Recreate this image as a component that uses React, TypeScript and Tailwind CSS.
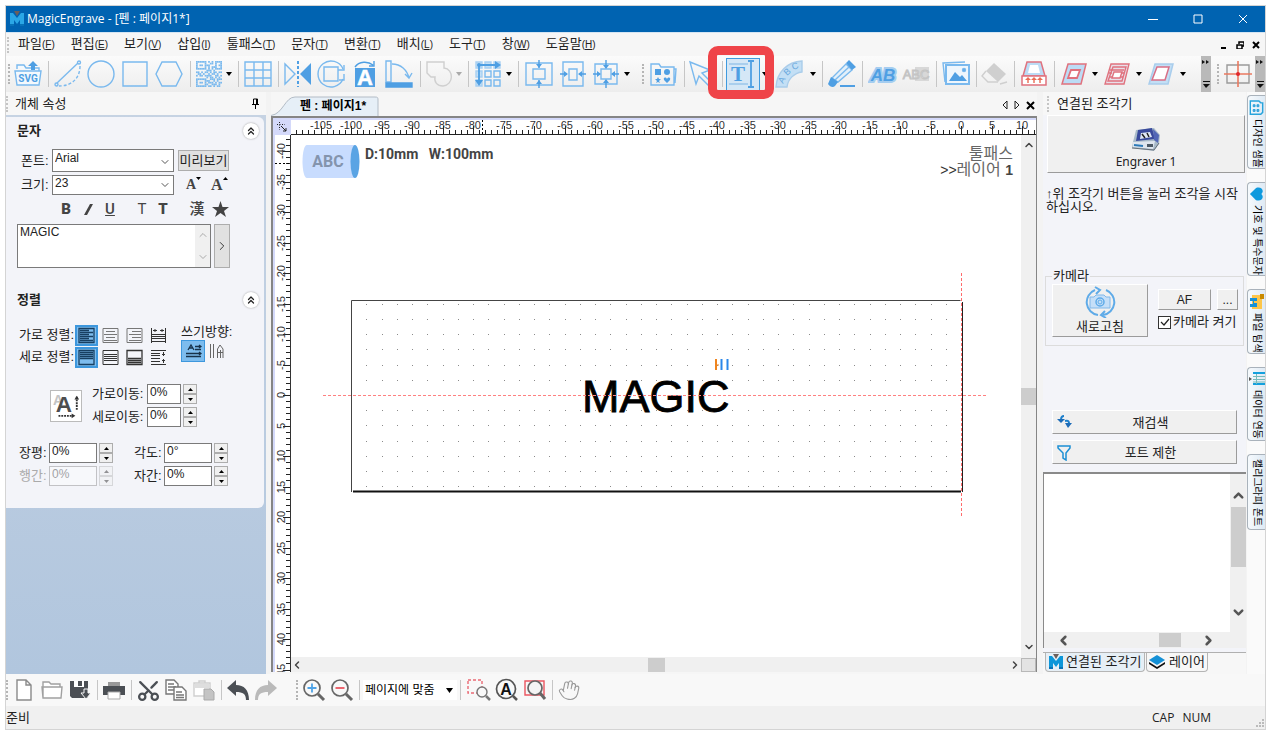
import React, { ReactNode } from 'react';
import { ChevronDown, ChevronUp, ChevronLeft, ChevronRight, ChevronsUp, Scissors, Hand } from 'lucide-react';

const LINE = '#7ab9ee';
const FILL = '#4f9fe3';
const PALE = '#c3dff5';
const GREY = '#cfcfcf';
const DARK = '#4b4f54';
const ROSE = '#e0727e';

const MM = 6.1;

interface IconProps { children: ReactNode; size?: number; }

function Ico({ children, size = 28 }: IconProps) {
  return (
    <svg width={size} height={size} viewBox="0 0 28 28" fill="none" stroke={LINE} strokeWidth="1.4" className="shrink-0 overflow-visible">
      {children}
    </svg>
  );
}

function Logo({ light }: { light?: boolean }) {
  return (
    <svg width="16" height="16" viewBox="0 0 16 16" className="shrink-0">
      <path d="M1 15V2h3l4 5 4-5h3v13h-4V9l-3 4-3-4v6z" fill={light ? '#2aa7e6' : '#0c96d9'} />
      <path d="M5 0h6L8 5z" fill="#6b5f5c" />
      <path d="M1 14h4M11 14h4" stroke="#0873b8" strokeWidth="2" />
    </svg>
  );
}

function Tool({ label, w = 'w-[34px]', children }: { label: string; w?: string; children: ReactNode }) {
  return (
    <button aria-label={label} title={label} className={`${w} h-8 shrink-0 flex items-center justify-center`}>
      {children}
    </button>
  );
}

function Drop({ off }: { off?: boolean }) {
  return (
    <button aria-label="더보기" className="w-[10px] h-8 shrink-0 flex items-center justify-center">
      <svg width="6" height="4" viewBox="0 0 6 4"><path d="M0 0h6L3 4z" fill={off ? '#aaa' : '#000'} /></svg>
    </button>
  );
}

function Sep() {
  return <div className="w-2 shrink-0 flex justify-center"><div className="w-px h-[26px] bg-[#c6c6c6]" /></div>;
}

function Grip() {
  return <div className="w-[6px] shrink-0 flex justify-center"><div className="h-5 border-l-2 border-dotted border-[#b5b5b5]" /></div>;
}

function Overflow() {
  return (
    <button aria-label="도구 모음 옵션" className="w-[10px] h-9 shrink-0 bg-[#b9b9b9] flex flex-col items-center justify-between py-1">
      <svg width="8" height="5" viewBox="0 0 8 5"><path d="M0 0l3 2-3 2zM4 0l3 2-3 2z" fill="#111" /></svg>
      <svg width="7" height="7" viewBox="0 0 7 7"><path d="M0 0h7v1H0zM0 3h7L3 7z" fill="#111" /></svg>
    </button>
  );
}

// Fixed bit pattern for the barcode tool icon
const QR = ['111111010101111', '100001001101001', '101101110001011', '100001010111001', '111111010101111', '000000111010000', '110101101011011', '011010010110100', '101101111001101', '000000101101010', '111111001110111', '100001110010100', '101101011101011', '100001100111010', '111111011010110'];

function Parallelogram({ kind }: { kind: 'in' | 'rings' | 'out' }) {
  if (kind === 'rings') {
    return (
      <Ico>
        <g stroke={ROSE} strokeWidth="1.4">
          <path d="M8 4h18l-5 20H2z" fill="#e8dfe8" />
          <path d="M10 7h13l-4 14H5z" />
          <path d="M7 10h14M6 13h3M18 13h3M6 17h3M17 17h3" />
          <path d="M11 12h8l-2 6H9z" fill="#fff" />
        </g>
      </Ico>
    );
  }
  return (
    <Ico>
      <path d="M8 4h18l-5 20H2z" fill={kind === 'out' ? PALE : '#bcdcf5'} stroke={kind === 'out' ? '#a9cdec' : ROSE} strokeWidth="1.5" />
      {kind === 'out'
        ? <path d="M10 7h12l-4 13H5z" fill="#fff" stroke="#d96f86" strokeWidth="1.5" />
        : <path d="M11 10h9l-3 8H8z" fill="#fff" stroke={ROSE} strokeWidth="1.8" />}
    </Ico>
  );
}

function MainToolbar() {
  return (
    <div className="h-9 flex items-center bg-gradient-to-b from-[#fbfbfb] to-[#ededed]">
      <Grip />
      <Tool label="SVG 불러오기" w="w-8">
        <Ico>
          <path d="M3 9V5h7l2 3h13v3M1 11h26l-2 14H3z" fill="#f4f9fd" />
          <path d="M19 1l5 5h-3v4h-4V6h-3z" fill={FILL} stroke="none" />
          <text x="14" y="22" textAnchor="middle" fontSize="10" fontWeight="700" fontFamily="Roboto, sans-serif" fill={FILL} stroke="none">SVG</text>
        </Ico>
      </Tool>
      <Sep />
      <Tool label="선" w="w-8">
        <Ico>
          <path d="M3 23L24 3" /><circle cx="25" cy="2.500" r="1.500" /><circle cx="2.500" cy="24.500" r="1.500" />
          <path d="M26 6c0 12-8 20-21 20" strokeDasharray="3 2" />
        </Ico>
      </Tool>
      <Tool label="원"><Ico><circle cx="14" cy="14" r="13" /></Ico></Tool>
      <Tool label="사각형"><Ico><path d="M2 2h24v24H2z" /></Ico></Tool>
      <Tool label="다각형"><Ico><path d="M7 2h14l6 12-6 12H7L1 14z" /></Ico></Tool>
      <Sep />
      <Tool label="바코드" w="w-[30px]">
        <svg width="26" height="26" viewBox="0 0 15 15" fill={LINE}>
          {QR.map((row, y) => row.split('').map((bit, x) => bit === '1' && <rect key={`${x}-${y}`} x={x} y={y} width="1" height="1" />))}
        </svg>
      </Tool>
      <Drop />
      <Sep />
      <Tool label="표" w="w-8"><Ico><path d="M1 2h26v24H1zM1 10h26M1 18h26M10 2v24M19 2v24" /></Ico></Tool>
      <Sep />
      <Tool label="대칭" w="w-8">
        <Ico><path d="M1 4v20l10-10z" /><path d="M27 3v22L16 14z" fill={FILL} stroke="none" /><path d="M14 1v26" strokeDasharray="3 2" stroke={FILL} strokeWidth="2" /></Ico>
      </Tool>
      <Tool label="회전"><Ico><path d="M26 9A13 13 0 1 0 26 19" /><path d="M27 5v5h-6M27 14v6h-5" /><path d="M7 7h14v14H7z" /></Ico></Tool>
      <Tool label="문자 회전">
        <Ico>
          <path d="M4 8h20v19H4z" fill={FILL} stroke="none" /><path d="M4 7c4-6 13-6 18-2M23 1v5h-5" stroke={FILL} />
          <text x="14" y="25" textAnchor="middle" fontSize="22" fontWeight="700" fontFamily="Liberation Sans, sans-serif" fill="#fff" stroke="#fff" strokeWidth="0.500">A</text>
        </Ico>
      </Tool>
      <Tool label="각도">
        <Ico><path d="M1 1h5v21H1z" /><path d="M1 23h26v4H1z" fill={FILL} stroke={FILL} /><path d="M7 4c9 0 15 6 17 14M20 14l4 4 3-5" /></Ico>
      </Tool>
      <Sep />
      <Tool label="결합" w="w-[30px]"><Ico><path d="M2 2h17v6c10 1 10 17-1 18-6 0-9-4-8-9H6l-4-4z" stroke={GREY} /></Ico></Tool>
      <Drop off />
      <Sep />
      <Tool label="배열" w="w-8">
        <Ico>
          <path d="M2 2h6v6H2zM11 2h6v6h-6zM20 2h6v6h-6zM2 11h6v6H2zM2 20h6v6H2z" fill={PALE} stroke="#a8d0f2" />
          <path d="M11 11h6v6h-6zM20 11h6v6h-6zM11 20h6v6h-6zM20 20h6v6h-6z" />
          <path d="M5 23V5h18" stroke={FILL} strokeWidth="1.800" /><path d="M21 1l6 4-6 4zM1 20l4 6 4-6z" fill={FILL} stroke="none" /><circle cx="5" cy="5" r="2" fill={FILL} stroke="none" />
        </Ico>
      </Tool>
      <Drop />
      <Sep />
      <Tool label="세로 가운데"><Ico><path d="M1 3h26v22H1zM8 9h12v10H8z" /><path d="M14 0v8M14 28v-8" stroke={FILL} /><path d="M11 4h6l-3 4zM11 24h6l-3-4z" fill={FILL} stroke="none" /></Ico></Tool>
      <Tool label="가로 가운데" ><Ico><path d="M4 2h20v24H4zM10 9h8v11h-8z" /><path d="M1 14h7M27 14h-7" stroke={FILL} /><path d="M5 11v6l4-3zM23 11v6l-4-3z" fill={FILL} stroke="none" /></Ico></Tool>
      <Tool label="정가운데" w="w-8"><Ico><path d="M3 4h22v20H3zM9 9h10v10H9z" /><path d="M1 14h7M27 14h-7M14 0v8M14 28v-8" stroke={FILL} /><path d="M5 11v6l4-3zM23 11v6l-4-3zM11 5h6l-3 4zM11 23h6l-3-4z" fill={FILL} stroke="none" /></Ico></Tool>
      <Drop />
      <div className="w-2 shrink-0" />
      <Grip />
      <Tool label="기호">
        <Ico>
          <path d="M2 4h8l2 3h13v18H2zM25 9h2l-1 14" />
          <path d="M6 9h6v6H6z" fill={FILL} stroke="none" /><circle cx="18" cy="12" r="3" fill={FILL} stroke="none" />
          <path d="M9 17l1 2h2l-2 2 1 2-2-1-2 1 1-2-2-2h2zM18 23l-3-3c-1-3 2-3 3-1 1-2 4-2 3 1z" fill={FILL} stroke="none" />
        </Ico>
      </Tool>
      <Sep />
      <Tool label="선택" w="w-[30px]"><Ico><path d="M1 2l20 8-8 3 10 10-3 3-10-10-3 8z" /></Ico></Tool>
      <Sep />
      <div className="relative shrink-0">
        <button aria-label="문자" aria-pressed="true" className="w-[34px] h-[33px] flex items-center justify-center border border-[#3f9ade] bg-[#d5e7f6]">
          <Ico>
            <path d="M0 4h19M0 24h19" stroke="#9ac6ea" />
            <text x="9" y="21" textAnchor="middle" fontSize="21" fontWeight="700" fontFamily="Liberation Serif, serif" fill={FILL} stroke="none">T</text>
            <path d="M19 1h6M22 1v26M19 27h6" stroke={FILL} strokeWidth="1.800" />
          </Ico>
        </button>
        <div className="absolute z-10 -left-[18px] -top-3 w-[66px] h-[53px] border-[9px] border-[#ef4449] rounded-[10px] pointer-events-none" />
      </div>
      <Drop />
      <Tool label="호 문자" w="w-[38px]">
        <Ico>
          <path d="M1 27C2 12 12 2 27 1v11c-8 1-14 7-15 15z" fill={PALE} stroke="#aacdea" />
          <g fill="#6aa9de" stroke="none" fontSize="9" fontFamily="Liberation Sans, sans-serif">
            <text transform="translate(8 24) rotate(-62)">A</text><text transform="translate(12 16) rotate(-42)">B</text><text transform="translate(18 10) rotate(-20)">C</text>
          </g>
        </Ico>
      </Tool>
      <Drop />
      <Sep />
      <Tool label="펜" w="w-8">
        <Ico><path d="M4 18L18 4l6 6-14 12z" fill="#e3f0fa" /><path d="M7 20L21 7" /><path d="M18 3l3-3 7 7-4 3zM0 24l3-7 7 5-3 4c-2 2-5 1-7-2zM12 25h15v2H12z" fill={FILL} stroke="none" /></Ico>
      </Tool>
      <Sep />
      <Tool label="윤곽 문자">
        <svg width="30" height="28" viewBox="0 0 30 28">
          <text x="15" y="21" textAnchor="middle" fontSize="17" fontWeight="700" fontStyle="italic" fontFamily="Liberation Sans, sans-serif" fill={FILL} stroke="#a5cdf0" strokeWidth="4" paintOrder="stroke">AB</text>
        </svg>
      </Tool>
      <Tool label="병합 문자" w="w-8">
        <svg width="28" height="28" viewBox="0 0 28 28">
          <path d="M13 7h14v14H13z" fill="#d8d8d8" />
          <text x="14" y="19" textAnchor="middle" fontSize="13" fontFamily="Liberation Sans, sans-serif" fill="#f5f5f5" stroke="#c4c4c4" strokeWidth="1">ABC</text>
        </svg>
      </Tool>
      <Sep />
      <Tool label="그림" w="w-8">
        <Ico><path d="M3 22L1 3l22-1" /><path d="M4 5h23v19H4z" fill="#eef6fd" strokeWidth="2" /><path d="M7 21l6-9 5 5 2-2 5 6z" fill={FILL} stroke="none" /><circle cx="22" cy="10" r="1.500" fill={FILL} /></Ico>
      </Tool>
      <Sep />
      <Tool label="지우개" w="w-[30px]">
        <Ico><path d="M13 3l12 11-8 8L5 11z" fill={GREY} stroke="none" /><path d="M5 11l-4 5 6 6h10M19 24l7-2" stroke={GREY} /></Ico>
      </Tool>
      <Sep />
      <Tool label="조각" w="w-8">
        <Ico>
          <path d="M7 2h14l4 14H3z" fill="#bcdcf5" stroke={ROSE} strokeWidth="1.500" /><path d="M10 5h8l2 8H8z" fill="#fff" stroke="none" />
          <path d="M2 16h24v9H2z" fill="#fff" stroke={ROSE} strokeWidth="1.500" />
          <path d="M8 23v-4M14 23v-4M20 23v-4" stroke="#ea6d55" /><path d="M5 20l3-3 3 3zM11 20l3-3 3 3zM17 20l3-3 3 3z" fill="#ea6d55" stroke="none" />
        </Ico>
      </Tool>
      <Sep />
      <Tool label="안쪽 채우기" w="w-8"><Parallelogram kind="in" /></Tool>
      <Drop />
      <Tool label="등고선 채우기"><Parallelogram kind="rings" /></Tool>
      <Drop />
      <Tool label="바깥쪽 채우기"><Parallelogram kind="out" /></Tool>
      <Drop />
      <div className="grow" />
      <Overflow />
      <div className="w-1 shrink-0" />
      <Grip />
      <Tool label="원점">
        <Ico><path d="M3 5h22v18H3z" stroke="#9a9a9a" /><path d="M0 14h28M14 1v26" stroke="#ea7a60" strokeWidth="1.600" /><circle cx="14" cy="14" r="2" fill="#e0262c" stroke="none" /></Ico>
      </Tool>
      <Overflow />
    </div>
  );
}

const MENUS = [['파일', 'F'], ['편집', 'E'], ['보기', 'V'], ['삽입', 'I'], ['툴패스', 'T'], ['문자', 'T'], ['변환', 'T'], ['배치', 'L'], ['도구', 'T'], ['창', 'W'], ['도움말', 'H']];

function Header() {
  return (
    <header>
      <div className="h-[26px] bg-[#0063b1] text-white flex items-center pl-[3px]">
        <Logo light />
        <h1 className="ml-0.5 text-xs font-['Open_Sans','Noto_Sans_CJK_KR',sans-serif]">MagicEngrave - [펜 : 페이지1*]</h1>
        <div className="ml-auto flex">
          <button aria-label="최소화" className="w-[45px] flex justify-center"><svg width="10" height="10" stroke="#fff"><path d="M0 5.500h10" /></svg></button>
          <button aria-label="최대화" className="w-[45px] flex justify-center"><svg width="10" height="10" stroke="#fff" fill="none"><path d="M1 1h8v8H1z" /></svg></button>
          <button aria-label="닫기" className="w-[45px] flex justify-center"><svg width="10" height="10" stroke="#fff"><path d="M1 1l8 8M9 1l-8 8" /></svg></button>
        </div>
      </div>
      <div className="h-6 flex items-center bg-[#f6f6f6] border-t border-[#d5e5f3]">
        <div className="h-4 ml-px border-l-2 border-dotted border-[#c5c5c5]" />
        <nav className="flex gap-4 ml-[9px]">
          {MENUS.map(([name, key]) => (
            <button key={name} className="text-[13px] leading-5 whitespace-nowrap text-[#222]">
              {name}<span className="text-[10px]">(<u>{key}</u>)</span>
            </button>
          ))}
        </nav>
        <div className="ml-auto flex items-center gap-2 pr-1">
          <button aria-label="창 최소화"><svg width="8" height="8"><path d="M1 6h5v2H1z" /></svg></button>
          <button aria-label="창 복원"><svg width="8" height="8" fill="none" stroke="#000"><path d="M3 3V1h5v4H6M1 4h5v4H1z" strokeWidth="1.500" /></svg></button>
          <button aria-label="창 닫기"><svg width="9" height="8" stroke="#000" strokeWidth="2"><path d="M1 1l6 6M7 1L1 7" /></svg></button>
        </div>
      </div>
      <MainToolbar />
    </header>
  );
}

function SectionHead({ title }: { title: string }) {
  return (
    <div className="flex items-center justify-between pr-[5px]">
      <h3 className="text-[13px] font-bold leading-5">{title}</h3>
      <button aria-label={`${title} 접기`} className="w-4 h-4 rounded-full bg-white shadow-[0_0_2px_#999] flex items-center justify-center">
        <ChevronsUp size={12} strokeWidth={2.5} />
      </button>
    </div>
  );
}

function Spin({ id, value, w, disabled }: { id: string; value: string; w: string; disabled?: boolean }) {
  return (
    <div className={`flex gap-0.5 ${disabled ? 'opacity-40' : ''}`}>
      <input id={id} defaultValue={value} disabled={disabled} className={`${w} h-5 border border-[#7a7a7a] bg-white px-0.5 pb-1 text-xs leading-none`} />
      <div className="flex flex-col w-[14px]">
        <button aria-label="증가" disabled={disabled} className="h-[10px] border border-[#adadad] bg-[#f0f0f0] flex items-center justify-center"><svg width="5" height="3"><path d="M0 3h5L2.500 0z" /></svg></button>
        <button aria-label="감소" disabled={disabled} className="h-[10px] border border-[#adadad] bg-[#f0f0f0] flex items-center justify-center"><svg width="5" height="3"><path d="M0 0h5L2.500 3z" /></svg></button>
      </div>
    </div>
  );
}

function Combo({ id, value, tall }: { id: string; value: string; tall?: boolean }) {
  return (
    <div className="relative w-[122px]">
      <select id={id} defaultValue={value} className={`block w-full appearance-none border border-[#7a7a7a] bg-white pl-0.5 text-xs leading-none ${tall ? 'h-[23px] pb-1.5' : 'h-5 pb-1'}`}>
        <option>{value}</option>
      </select>
      <ChevronDown size={12} color="#555" className="absolute right-[3px] bottom-1 pointer-events-none" />
    </div>
  );
}

// Paragraph alignment glyphs: a frame with text lines inside
function AlignIcon({ kind }: { kind: string }) {
  const c = kind.startsWith('h') && kind !== 'hleft' ? '#777' : '#333';
  return (
    <svg width="17" height="17" viewBox="0 0 17 17" fill="none" stroke={c}>
      {kind === 'hleft' && <path d="M1 1.500h15v14H1zM2 3.500h9M2 5.500h13M2 7.500h9M2 9.500h13M2 11.500h9M2 13.500h13" stroke="#173f62" strokeWidth="1.300" />}
      {kind === 'hmid' && <path d="M1 1.500h15v14H1zM4 4.500h9M2 7.500h13M4 10.500h9M2 13.500h13" />}
      {kind === 'hright' && <path d="M1 1.500h15v14H1zM6 4.500h9M3 7.500h12M6 10.500h9M3 13.500h12" />}
      {kind === 'hjust' && <path d="M1.500 1v15M15.500 1v15M2 7.500h13M2 9.500h13M2 11.500h13M2 14.500h13M3 3.500h4M10 3.500h4M5 2v3M12 2v3" stroke="#333" />}
      {kind === 'vtop' && <path d="M1 1.500h15v14H1zM2 3.500h13M2 5.500h13M2 7.500h13M2 9.500h13" stroke="#173f62" strokeWidth="1.300" />}
      {kind === 'vmid' && <path d="M1 1.500h15v14H1zM2 5.500h13M2 7.500h13M2 9.500h13M2 11.500h13" />}
      {kind === 'vbottom' && <path d="M1 1.500h15v14H1zM2 9.500h13M2 11.500h13M2 13.500h13" strokeWidth="1.300" />}
      {kind === 'vjust' && <path d="M1 1.500h15M1 15.500h15M1 4.500h9M1 6.500h9M1 9.500h9M1 12.500h9M13.500 3v4M13.500 10v4M12 5.500h3M12 11.500h3" />}
    </svg>
  );
}

function AlignRow({ label, kinds }: { label: string; kinds: string[] }) {
  return (
    <div className="flex items-center h-[22px]">
      <span className="w-[56px] text-[13px] leading-5 whitespace-nowrap">{label}</span>
      {kinds.map((k, i) => (
        <button key={k} aria-label={k} aria-pressed={i === 0}
          className={`h-[21px] flex items-center justify-center ${i === 0 ? 'w-[23px] border-2 border-[#3d97dd] bg-[#7dbcee]' : 'w-6'}`}>
          <AlignIcon kind={k} />
        </button>
      ))}
    </div>
  );
}

function LeftPanel() {
  return (
    <aside className="w-[260px] shrink-0 flex flex-col text-[#222]">
      <div className="h-[23px] flex items-center bg-[#f7f7f7]">
        <div className="h-4 border-l-2 border-dotted border-[#c5c5c5]" />
        <h2 className="ml-[7px] text-[13px]">개체 속성</h2>
        <button aria-label="고정" className="ml-auto mr-[6px]">
          <svg width="9" height="11" viewBox="0 0 9 11" fill="none" stroke="#000"><path d="M2.500 6V1h4v5M5.500 1v5M1 6.500h7M4.500 7v4" /></svg>
        </button>
      </div>
      <div className="grow bg-gradient-to-b from-[#c6d3e3] to-[#b1c6de] pt-0.5">
        <div className="mr-0.5 h-[391px] bg-[#f3f4f9] rounded-r-md pl-[11px] pt-1">
          <SectionHead title="문자" />
          <div className="flex items-center mt-2">
            <label htmlFor="font" className="w-[35px] pl-1 text-[13px] whitespace-nowrap leading-5">폰트:</label>
            <Combo id="font" value="Arial" tall />
            <button className="ml-1 w-[51px] h-[21px] border border-[#adadad] bg-[#e1e1e1] text-[13px] leading-none whitespace-nowrap">미리보기</button>
          </div>
          <div className="flex items-center mt-[3px]">
            <label htmlFor="size" className="w-[35px] pl-1 text-[13px] whitespace-nowrap leading-5">크기:</label>
            <Combo id="size" value="23" />
            <button aria-label="글자 작게" className="ml-3 w-[25px] font-['Liberation_Serif',serif] font-bold text-sm leading-5 text-[#444] flex">A<svg width="5" height="3" className="mt-0.5"><path d="M0 0h5L2.500 3z" /></svg></button>
            <button aria-label="글자 크게" className="font-['Liberation_Serif',serif] font-bold text-base leading-5 text-[#444] flex">A<svg width="5" height="3" className="mt-0.5"><path d="M0 3h5L2.500 0z" /></svg></button>
          </div>
          <div className="h-7 flex items-center pl-[38px] text-[#444] text-[15px] font-['Roboto','Noto_Sans_CJK_KR',sans-serif]">
            <button aria-label="굵게" className="w-[22px] font-black">B</button>
            <button aria-label="기울임" className="w-[22px] flex justify-center"><svg width="9" height="11"><path d="M6 0h3L3 11H0z" fill="#444" /></svg></button>
            <button aria-label="밑줄" className="w-[22px] font-medium underline">U</button>
            <button aria-label="가늘게" className="ml-2.5 w-[22px]">T</button>
            <button aria-label="두껍게" className="w-[20px] font-black">T</button>
            <button aria-label="한자" className="ml-3 w-[24px] font-medium leading-5">漢</button>
            <button aria-label="특수문자" className="w-[22px] flex justify-center"><svg width="17" height="16" viewBox="0 0 17 16"><path d="M8.500 0l2 6H17l-5 4 2 6-5.500-4L3 16l2-6-5-4h6.500z" fill="#444" /></svg></button>
          </div>
          <div className="flex gap-[3px] mt-px">
            <div className="flex w-[194px] h-11 border border-[#7a7a7a] bg-white">
              <textarea aria-label="문자 입력" defaultValue="MAGIC" className="grow w-0 resize-none pl-0.5 text-xs leading-[15px] overflow-hidden" />
              <div className="w-[15px] bg-[#f0f0f0] flex flex-col items-center justify-between py-1 text-[#aaa]">
                <ChevronUp size={12} /><ChevronDown size={12} />
              </div>
            </div>
            <button aria-label="펼치기" className="w-4 h-11 border border-[#adadad] bg-[#e1e1e1] flex items-center justify-center"><ChevronRight size={14} strokeWidth={1.5} /></button>
          </div>

          <div className="mt-[22px]"><SectionHead title="정렬" /></div>
          <div className="flex gap-[11px] mt-[14px] pl-0.5">
            <div>
              <AlignRow label="가로 정렬:" kinds={['hleft', 'hmid', 'hright', 'hjust']} />
              <AlignRow label="세로 정렬:" kinds={['vtop', 'vmid', 'vbottom', 'vjust']} />
            </div>
            <div>
              <div className="text-[13px] leading-4 whitespace-nowrap">쓰기방향:</div>
              <div className="flex">
                <button aria-label="가로쓰기" aria-pressed="true" className="w-6 h-[22px] border border-[#3d97dd] bg-[#7dbcee] flex items-center justify-center">
                  <svg width="17" height="16" viewBox="0 0 17 16" fill="none" stroke="#18324a" strokeWidth="1.300"><path d="M3 7l3-5 3 5M4 5h4M10 3.500h6M10 6.500h6M1 10.500h15M1 13.500h15M14 2l2 1.500-2 1.500M14 9l2 1.500-2 1.500" /></svg>
                </button>
                <button aria-label="세로쓰기" className="w-6 h-[22px] flex items-center justify-center">
                  <svg width="16" height="16" viewBox="0 0 16 16" fill="none" stroke="#666"><path d="M1.500 1v14M4.500 1v14M8.500 15V6l2.500-4 3 4v9M8 9.500h6M11.500 7v8" /></svg>
                </button>
              </div>
            </div>
          </div>
          <div className="flex items-center mt-4 pl-[33px]">
            <svg width="32" height="32" viewBox="0 0 32 32" className="bg-white border border-[#bbb]">
              <text x="2" y="15" fontSize="15" fontFamily="Liberation Sans, sans-serif" fontWeight="700" fill="#c4c4c4">A</text>
              <text x="5" y="22" fontSize="24" fontFamily="Liberation Sans, sans-serif" fontWeight="700" fill="#4d4d4d">A</text>
              <path d="M8 26.500h15M27.500 6v14" stroke="#333" strokeWidth="2" strokeDasharray="2 1" /><path d="M22 24l4 2.500-4 2.500zM25 9l2.500-4 2.500 4z" fill="#333" />
            </svg>
            <div className="ml-2.5 space-y-[3px]">
              <div className="flex items-center"><label htmlFor="mx" className="w-[55px] text-[13px] leading-5 whitespace-nowrap">가로이동:</label><Spin id="mx" value="0%" w="w-[34px]" /></div>
              <div className="flex items-center"><label htmlFor="my" className="w-[55px] text-[13px] leading-5 whitespace-nowrap">세로이동:</label><Spin id="my" value="0%" w="w-[34px]" /></div>
            </div>
          </div>
          <div className="grid grid-cols-[115px_115px] gap-y-[3px] mt-4 pl-0.5">
            <div className="flex items-center"><label htmlFor="ratio" className="w-[30px] text-[13px] leading-5 whitespace-nowrap">장평:</label><Spin id="ratio" value="0%" w="w-12" /></div>
            <div className="flex items-center"><label htmlFor="angle" className="w-[30px] text-[13px] leading-5 whitespace-nowrap">각도:</label><Spin id="angle" value="0°" w="w-12" /></div>
            <div className="flex items-center"><label htmlFor="lead" className="w-[30px] text-[13px] leading-5 whitespace-nowrap text-[#aaa]">행간:</label><Spin id="lead" value="0%" w="w-12" disabled /></div>
            <div className="flex items-center"><label htmlFor="kern" className="w-[30px] text-[13px] leading-5 whitespace-nowrap">자간:</label><Spin id="kern" value="0%" w="w-12" /></div>
          </div>
        </div>
      </div>
    </aside>
  );
}

const X0 = 670;
const Y0 = 260;
const range = (from: number, to: number) => Array.from({ length: to - from + 1 }, (_, i) => from + i);

function HRuler() {
  return (
    <svg className="w-full h-full bg-white border-t-2 border-[#d4d9fa]">
      {range(-109, 12).map(n => {
        const x = Math.round(X0 + n * MM);
        return <rect key={n} x={x} y={n % 5 === 0 ? 6 : 10} width="1" height="9" fill="#222" />;
      })}
      {range(-21, 2).map(n => (
        <text key={n} x={Math.round(X0 + n * 5 * MM)} y="9" textAnchor="middle" fontSize="11" fill="#333">{n * 5}</text>
      ))}
      <path d="M191.500 0v16" stroke="#000" strokeDasharray="2 2" />
      <path d="M0 14.500h2000" stroke="#222" />
    </svg>
  );
}

function VRuler() {
  return (
    <svg className="w-full h-full bg-white border-l-2 border-[#d4d9fa]">
      {range(-42, 45).map(n => {
        const y = Math.round(Y0 + n * MM);
        return <rect key={n} x={n % 5 === 0 ? 8 : 11} y={y} width="8" height="1" fill="#222" />;
      })}
      {range(-8, 9).map(n => (
        <text key={n} transform={`translate(10 ${Math.round(Y0 + n * 5 * MM)}) rotate(-90)`} textAnchor="middle" fontSize="11" fill="#333">{n * 5}</text>
      ))}
      <path d="M0 28.500h16" stroke="#000" strokeDasharray="2 2" />
      <path d="M15.500 0v2000" stroke="#333" />
    </svg>
  );
}

function Artboard() {
  const left = X0 - 610;
  return (
    <svg className="absolute inset-0 w-full h-full">
      <path d="M16 10h48v33H16c-6 0-6-33 0-33z" fill="#c8dcfe" />
      <ellipse cx="64" cy="26.500" rx="4.500" ry="16.500" fill="#5aa4e4" />
      <text x="37" y="32" textAnchor="middle" fontSize="16" fontWeight="700" fontFamily="Roboto, sans-serif" fill="#8494ad">ABC</text>
      {range(1, 39).map(i => range(-6, 6).filter(j => j !== 0).map(j => (
        <rect key={`${i}_${j}`} x={Math.round(left + i * 15.25)} y={Math.round(Y0 + j * 15.2)} width="1" height="1" fill="#8a8a8a" />
      )))}
      <path d={`M${left + 0.5} 357V165.500h609`} fill="none" stroke="#444" />
      <path d={`M${left + 2} 356.500h608`} stroke="#111" strokeWidth="2" />
      <path d={`M${X0 + 1.5} 167v190`} stroke="#222" />
      <text x="291" y="277" fontSize="45" fontFamily="Liberation Sans, Arial, sans-serif" stroke="#000" strokeWidth="0.800">MAGIC</text>
      {range(0, 132).map(i => <rect key={i} x={32 + i * 5} y={Y0} width="3" height="1" fill="#ff8080" />)}
      {range(0, 48).map(i => <rect key={i} x={X0} y={138 + i * 5} width="1" height="3" fill="#ff6b6b" />)}
      <path d="M425 224v11" stroke="#f0851e" strokeWidth="2" /><path d="M426 230h2" stroke="#f0851e" />
      <path d="M430.500 224v11M436.500 224v11" stroke="#2b87ea" strokeWidth="2" />
    </svg>
  );
}

function Workspace() {
  return (
    <main className="grow min-w-0 flex flex-col ml-[5px] bg-[#f6f6f6]">
      <div className="h-6 flex items-end">
        <div className="relative w-[108px] h-5 flex items-center justify-center pl-4">
          <svg className="absolute inset-0" width="108" height="20" fill="#e6eff7" stroke="#b3bcc6"><path d="M0 19.500C12 18 14 1 24 1h80c3 0 3 1 3 3v16" /></svg>
          <span className="relative text-xs font-bold">펜 : 페이지1*</span>
        </div>
        <div className="ml-auto flex gap-1.5 mb-1.5 pr-0.5">
          <button aria-label="이전 탭"><svg width="6" height="10" fill="none" stroke="#222"><path d="M5 1v8L1 5z" /></svg></button>
          <button aria-label="다음 탭"><svg width="6" height="10" fill="none" stroke="#222"><path d="M1 1v8l4-4z" /></svg></button>
          <button aria-label="탭 닫기"><svg width="9" height="10" stroke="#000" strokeWidth="2"><path d="M1 2l7 7M8 2L1 9" /></svg></button>
        </div>
      </div>
      <div className="grow min-h-0 grid grid-cols-[18px_minmax(0,1fr)] grid-rows-[17px_minmax(0,1fr)] border-l-2 border-t-2 border-r border-[#858585] bg-[#d4d9fa] mb-0.5">
        <button aria-label="눈금자 원점" className="flex items-center justify-center">
          <svg width="12" height="12" viewBox="0 0 12 12" stroke="#222" fill="none"><path d="M1 3.500h8M3.500 1v8" strokeDasharray="1 1.500" /><path d="M5 5l5 5M10 7v3H7" /></svg>
        </button>
        <HRuler />
        <VRuler />
        <div className="flex flex-col bg-[#f0f0f0]">
          <div className="grow min-h-0 flex">
            <div className="relative grow bg-white overflow-hidden">
              <Artboard />
              <div className="absolute left-[74px] top-[11px] text-sm leading-4 font-bold text-[#444] whitespace-pre font-['Roboto',sans-serif]">D:10mm   W:100mm</div>
              <div className="absolute right-2 top-[11px] text-right text-base leading-4 text-[#666]">
                <div>툴패스</div>
                <div><span className="text-sm leading-4 text-[#333]">&gt;&gt;</span>레이어 <span className="text-sm leading-4 font-bold text-[#444]">1</span></div>
              </div>
            </div>
            <div className="w-[15px] shrink-0 flex flex-col items-center justify-between py-1">
              <ChevronUp size={12} strokeWidth={3} color="#444" />
              <div className="w-[15px] h-[17px] bg-[#cdcdcd]" />
              <ChevronDown size={12} strokeWidth={3} color="#444" />
            </div>
          </div>
          <div className="h-[15px] flex items-center">
            <div className="grow flex items-center justify-between">
              <ChevronLeft size={12} strokeWidth={3} color="#444" />
              <div className="w-[17px] h-[14px] bg-[#cdcdcd]" />
              <ChevronRight size={12} strokeWidth={3} color="#444" />
            </div>
            <div className="w-[15px] h-[14px] border border-[#b8b8b8] bg-[#e3e3e3]" />
          </div>
        </div>
      </div>
    </main>
  );
}

const RAISED = 'bg-[#f0f0f0] border border-t-white border-l-white border-r-[#9b9b9b] border-b-[#9b9b9b]';

function RightPanel() {
  return (
    <aside className="w-[203px] shrink-0 ml-[6px] flex flex-col bg-[#f3f4f9] text-[#222]">
      <div className="h-[23px] shrink-0 flex items-center bg-[#f7f7f7]">
        <div className="h-4 ml-1 border-l-2 border-dotted border-[#c5c5c5]" />
        <h2 className="ml-2 text-[13px]">연결된 조각기</h2>
      </div>
      <button className={`${RAISED} ml-1 mr-px h-[58px] shrink-0 flex flex-col items-center justify-end pb-px`}>
        <svg width="32" height="26" viewBox="0 0 32 26">
          <path d="M6 3l18-2 6 7-1 9-5 7-22-3 1-6z" fill="#a9bbc9" />
          <path d="M8 3l14-2 3 11-19 2z" fill="#394a9c" /><path d="M11 6l9-1 2 5-12 2z" fill="#dfe8f5" />
          <path d="M12 7l3 4M17 6l2 4" stroke="#222" strokeWidth="1.500" />
          <path d="M23 2l6 6-1 8-4-3z" fill="#5267b6" /><path d="M3 15l22-1-2 8-20-2z" fill="#dfe6ee" />
          <path d="M4 18l9 1" stroke="#2c7ab8" strokeWidth="2" /><path d="M2 21l22 2 5-7" stroke="#69727b" fill="none" /><path d="M17 17h6v3h-6z" fill="#4d5a66" />
        </svg>
        <span className="text-xs leading-[18px] font-['Noto_Sans',sans-serif]">Engraver 1</span>
      </button>
      <p className="mt-[14px] ml-[3px] text-[13px] leading-[13px] break-all">↑위 조각기 버튼을 눌러 조각을 시작하십시오.</p>
      <fieldset className="mt-[55px] mx-0.5 h-[78px] shrink-0 border border-[#dcdcdc] pl-[6px]">
        <legend className="px-px text-[13px] leading-4">카메라</legend>
        <div className="flex">
          <button className={`${RAISED} w-[96px] h-[53px] flex flex-col items-center justify-end text-[13px] leading-[18px]`}>
            <svg width="32" height="32" viewBox="0 0 32 32" fill="none" stroke="#5fabe8" strokeWidth="2">
              <path d="M11 4A13 13 0 0 0 14 29M19 29A13 13 0 0 0 22 4M11 1l5 3-4 4M22 32l-5-3 4-4" />
              <path d="M6 11h4l2-2h8l2 2h4v11H6z" fill="#c5dff8" strokeWidth="1" stroke="#80b8ea" /><circle cx="16" cy="16" r="4" strokeWidth="1.500" /><circle cx="16" cy="16" r="2" strokeWidth="1" />
            </svg>
            새로고침
          </button>
          <div className="ml-2.5 mt-[5px]">
            <div className="flex gap-1.5">
              <button className={`${RAISED} w-[53px] h-[21px] text-xs`}>AF</button>
              <button className={`${RAISED} w-[21px] h-[21px] text-xs`}>...</button>
            </div>
            <label className="flex items-center gap-0.5 mt-0.5 text-[13px] leading-5 whitespace-nowrap">
              <span className="relative w-[13px] h-[13px]">
                <input type="checkbox" defaultChecked className="absolute inset-0 w-[13px] h-[13px] appearance-none border border-[#333] bg-white" />
                <svg className="absolute inset-0 pointer-events-none" width="13" height="13" fill="none" stroke="#222" strokeWidth="1.200"><path d="M3 6l3 3 5-6" /></svg>
              </span>
              카메라 켜기
            </label>
          </div>
        </div>
      </fieldset>
      <div className="grow" />
      <div className="px-[9px] space-y-1.5 mb-2">
        <button className={`${RAISED} relative w-full h-6 text-[13px] leading-none block pl-3`}>
          <svg className="absolute left-1 top-1" width="15" height="14" viewBox="0 0 15 14" fill="none" stroke="#1d7fcb" strokeWidth="2"><path d="M7 1C4 1 4 3 4 5M8 6c4-1 4 1 4 3" /><path d="M0 4h8L4 8zM8 8h7l-4 5z" fill="#1d6cb8" stroke="none" /></svg>
          재검색
        </button>
        <button className={`${RAISED} relative w-full h-6 text-[13px] leading-none block pl-3`}>
          <svg className="absolute left-1 top-1" width="15" height="16" viewBox="0 0 15 16" fill="none" stroke="#1b8fd4" strokeWidth="1.500"><path d="M1 1h12v2L9 8v7l-3-2V8L1 3z" /></svg>
          포트 제한
        </button>
      </div>
      <div className="h-[176px] shrink-0 grid grid-cols-[1fr_16px] grid-rows-[1fr_16px] border-l border-t-2 border-[#8a8a8a] bg-[#f0f0f0]">
        <div className="bg-white" />
        <div className="flex flex-col items-center pt-3.5">
          <ChevronUp size={15} strokeWidth={4} color="#555" />
          <div className="mt-1 w-[15px] h-[60px] bg-[#cdcdcd]" />
          <ChevronDown size={15} strokeWidth={4} color="#555" className="mt-auto mb-3" />
        </div>
        <div className="flex items-center pl-3 pr-3.5">
          <ChevronLeft size={15} strokeWidth={4} color="#555" />
          <div className="ml-auto w-[22px] h-[14px] bg-[#cdcdcd]" />
          <ChevronRight size={15} strokeWidth={4} color="#555" className="ml-5" />
        </div>
      </div>
      <div className="shrink-0 mt-1 h-[22px] flex gap-px pl-0.5 border-t border-[#b0b0b0] text-[13px] leading-[18px] bg-[#f7f7f7]">
        <button className="w-[100px] h-[19px] flex items-center gap-0.5 pl-0.5 whitespace-nowrap rounded-b border border-t-0 border-[#b5b5b5] bg-[#e6eff6]"><Logo />연결된 조각기</button>
        <button className="w-[62px] h-[19px] flex items-center gap-1 pl-0.5 whitespace-nowrap rounded-b border border-t-0 border-[#b5b5b5] bg-[#f7f7f7]">
          <svg width="16" height="14" viewBox="0 0 16 14"><path d="M0 7l8 5 8-5v2l-8 5-8-5z" fill="#111" /><path d="M8 0l8 5-8 5-8-5z" fill="#1490d6" /></svg>
          레이어
        </button>
      </div>
    </aside>
  );
}

function SideTab({ label, h, children }: { label: string; h: string; children?: ReactNode }) {
  return (
    <button className={`${h} w-[18px] shrink-0 flex flex-col items-center gap-1 pt-1 border border-r-0 border-[#a9b2bb] rounded-l bg-gradient-to-r from-[#f6fafd] to-[#dfeaf4]`}>
      {children}
      <span className="text-[10px] leading-4 whitespace-nowrap [writing-mode:vertical-rl] [text-orientation:sideways]">{label}</span>
    </button>
  );
}

function SideTabs() {
  return (
    <div className="w-[18px] shrink-0 ml-px pt-[3px] flex flex-col gap-[13px] bg-[#fafafa]">
      <SideTab label="디자인 샘플" h="h-[74px]">
        <svg width="15" height="16" viewBox="0 0 15 16" fill="none" stroke="#27a4dc" strokeWidth="1.500"><path d="M1 1h9l2 2h2v10l-2 2H1z" /><path d="M4 5h2v2H4zM8 5h2v2H8zM4 10h2v2H4zM8 10h2v2H8z" fill="#5b9ad4" strokeWidth="1" /></svg>
      </SideTab>
      <SideTab label="기호 및 특수문자" h="h-[94px]">
        <svg width="15" height="16" viewBox="0 0 15 16"><path d="M0 8l7-7c6-2 10 3 6 7 4 4 0 9-6 7z" fill="#0e9ade" /></svg>
      </SideTab>
      <SideTab label="파일 탐색" h="h-[65px]">
        <svg width="15" height="15" viewBox="0 0 15 15"><path d="M3 1h12v4h-2v10H3z" fill="#fdc64a" /><path d="M11 0h4v5h-4z" fill="#c98a00" /><path d="M1 4h7v3H5v2h3v4H1v-3h3V7H1z" fill="#1591d8" /></svg>
      </SideTab>
      <SideTab label="데이터 연동" h="h-[74px]">
        <svg width="16" height="14" viewBox="0 0 16 14" fill="none"><path d="M4 1h12M4 12h12" stroke="#14a0dd" strokeWidth="2" /><path d="M4 4.500h12M4 7.500h12M4 10h12M7.500 2v10" stroke="#7bb" /><path d="M0 5l3 2-3 2z" fill="#555" /></svg>
      </SideTab>
      <SideTab label="캘리그라피 폰트" h="h-[76px]" />
    </div>
  );
}

function FileButton({ label, children }: { label: string; children: ReactNode }) {
  return <button aria-label={label} title={label} className="w-7 h-7 shrink-0 flex items-center justify-center">{children}</button>;
}

function SmallSep() {
  return <div className="w-[6px] shrink-0 flex justify-center"><div className="w-px h-5 bg-[#c6c6c6]" /></div>;
}

function G({ children, c = DARK }: { children: ReactNode; c?: string }) {
  return <svg width="24" height="24" viewBox="0 0 24 24" fill="none" stroke={c} strokeWidth="1.4">{children}</svg>;
}

function BottomToolbar() {
  return (
    <div className="h-8 shrink-0 flex items-center bg-[#f8f8f8]">
      <div className="h-5 border-l-2 border-dotted border-[#b5b5b5] mr-0.5" />
      <FileButton label="새로 만들기"><G c="#8a8a8a"><path d="M5 2h9l5 5v15H5zM14 2v5h5" fill="#fff" /></G></FileButton>
      <FileButton label="열기"><G c="#a0a0a0"><path d="M3 20V4h6l2 2h9v3M2 9h20l-1 11H3z" fill="#fff" /></G></FileButton>
      <FileButton label="저장"><G><path d="M2 3h18v17H4l-2-2z" fill={DARK} stroke="none" /><path d="M6 3h10v6H6z" fill="#fff" stroke="none" /><path d="M10 3h4v5h-4z" fill={DARK} stroke="none" /><path d="M16 11h4v4h3l-5 6-5-6h3z" fill={DARK} stroke="#f8f8f8" strokeWidth="1" /></G></FileButton>
      <SmallSep />
      <FileButton label="인쇄"><G><path d="M6 4h12v4H6z" fill="#999" stroke="none" /><path d="M1 8h22v9H1z" fill={DARK} stroke="none" /><path d="M6 14h12v7H6z" fill="#fff" stroke="#aaa" strokeWidth="1" /></G></FileButton>
      <SmallSep />
      <FileButton label="잘라내기"><Scissors size={25} color={DARK} strokeWidth={2.2} className="-rotate-90" /></FileButton>
      <FileButton label="복사"><G c="#777"><path d="M2 2h8l4 4v10H2zM4 6h6M4 9h8M4 12h8" fill="#fff" /><path d="M10 9h8l4 4v9H10zM12 14h6M12 17h8M12 19.500h8" fill="#fff" /></G></FileButton>
      <FileButton label="붙여넣기"><G c="#cfcfcf"><path d="M2 5h16v13H2zM7 5V3h6v2" fill="#fff" /><path d="M2 6h16v4H2z" fill="#dedede" stroke="none" /><path d="M12 11h7l3 3v8H12z" fill="#c4c4c4" stroke="#aaa" strokeWidth="1" /></G></FileButton>
      <SmallSep />
      <FileButton label="실행 취소"><G><path d="M1 10l9-8v5c8 0 13 5 13 15h-3c0-6-3-8-10-8v4z" fill={DARK} stroke="none" /></G></FileButton>
      <FileButton label="다시 실행"><G><path d="M23 10l-9-8v5C6 7 1 12 1 22h3c0-6 3-8 10-8v4z" fill="#bababa" stroke="none" /></G></FileButton>
      <div className="w-4 shrink-0" />
      <div className="h-5 border-l-2 border-dotted border-[#b5b5b5] mr-0.5" />
      <FileButton label="확대"><G c="#666"><circle cx="10" cy="10" r="8" strokeWidth="1.700" /><path d="M16 16l6 6" strokeWidth="3" /><path d="M10 5.500v9M5.500 10h9" stroke="#4fa3e6" strokeWidth="1.800" /></G></FileButton>
      <FileButton label="축소"><G c="#666"><circle cx="10" cy="10" r="8" strokeWidth="1.700" /><path d="M16 16l6 6" strokeWidth="3" /><path d="M5.500 10h9" stroke="#ea5560" strokeWidth="1.800" /></G></FileButton>
      <SmallSep />
      <div className="relative ml-px w-[94px] shrink-0">
        <select aria-label="배율" defaultValue="페이지에 맞춤" className="block w-full h-5 appearance-none bg-white pl-0.5 text-xs leading-none"><option>페이지에 맞춤</option></select>
        <svg className="absolute right-1 top-2 pointer-events-none" width="7" height="5"><path d="M0 0h7L3.500 5z" /></svg>
      </div>
      <SmallSep />
      <div className="w-0.5 shrink-0" />
      <FileButton label="영역 확대"><G c="#777"><path d="M1 2h14v13H1z" stroke="#ea6a74" strokeDasharray="3 2" /><circle cx="15" cy="14" r="5" fill="#f8f8f8" /><path d="M19 18l4 4" strokeWidth="2.500" /></G></FileButton>
      <FileButton label="전체 보기">
        <G c="#555"><circle cx="11" cy="11" r="9.500" strokeWidth="1.700" /><path d="M18 18l4 4" strokeWidth="2.500" /><text x="11" y="17" textAnchor="middle" fontSize="16" fontWeight="700" fontFamily="Liberation Sans, sans-serif" fill="#111" stroke="none">A</text></G>
      </FileButton>
      <FileButton label="페이지 보기"><G c="#666"><path d="M2 3h19v14H2z" stroke="#ea5560" /><circle cx="12" cy="10" r="7" fill="#f4f4f4" strokeWidth="1.700" /><path d="M17 15l5 6" strokeWidth="3" /></G></FileButton>
      <SmallSep />
      <FileButton label="이동"><Hand size={22} color="#999" strokeWidth={1.2} className="rotate-12" /></FileButton>
    </div>
  );
}

export default function App() {
  return (
    <div className="h-screen min-h-[640px] bg-white pl-[5px] pt-[5px] pr-[6px] pb-[3px] text-black font-['Liberation_Sans','Noto_Sans_CJK_KR',sans-serif]">
      <div className="h-full flex flex-col border border-[#d4d4d4] bg-[#f0f0f0] overflow-hidden">
        <Header />
        <div className="grow min-h-0 flex bg-[#f3f3f3]">
          <LeftPanel />
          <Workspace />
          <RightPanel />
          <SideTabs />
        </div>
        <BottomToolbar />
        <footer className="h-[23px] shrink-0 flex items-center text-[13px] text-[#222]">
          <span>준비</span>
          <div className="ml-auto flex gap-2 text-xs font-['Open_Sans',sans-serif]"><span>CAP</span><span>NUM</span></div>
          <svg className="ml-11 mt-3" width="10" height="9" fill="#bbb"><path d="M7 0h2v2H7zM4 3h2v2H4zM7 3h2v2H7zM1 6h2v2H1zM4 6h2v2H4zM7 6h2v2H7z" /></svg>
        </footer>
      </div>
    </div>
  );
}
